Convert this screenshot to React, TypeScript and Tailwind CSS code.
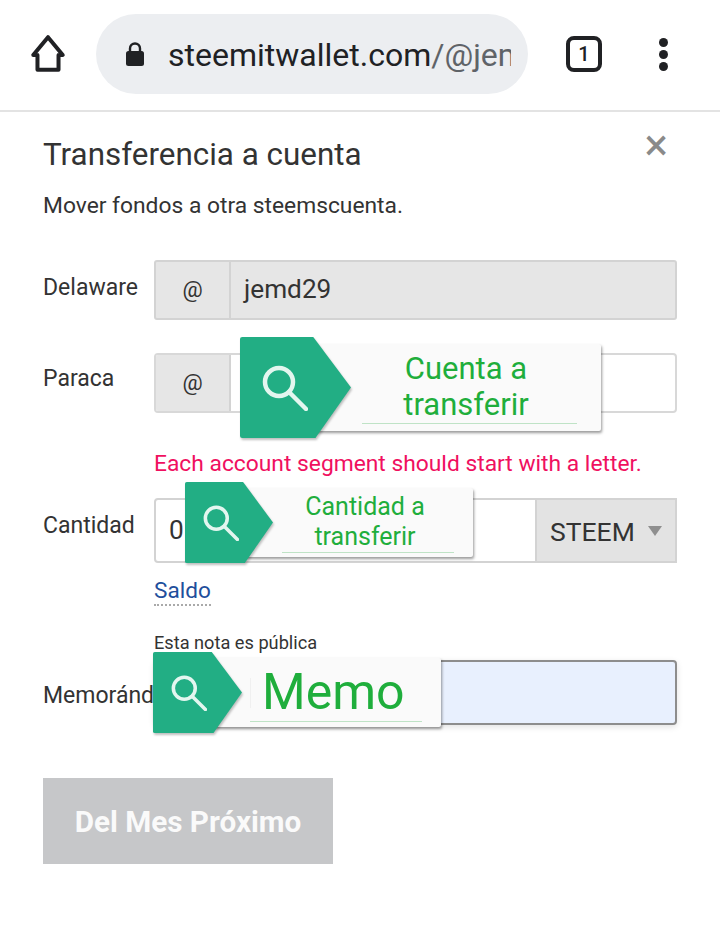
import React from 'react';

const HomeIcon = () => (
  <svg width="40" height="40" viewBox="0 0 38 38" fill="none" stroke="#202124" strokeWidth="3.8" strokeLinejoin="round">
    <path d="M19 3 L33 20 H29 V34 H9 V20 H5 Z" />
  </svg>
);

const LockIcon = () => (
  <svg width="22" height="26" viewBox="0 0 22 26">
    <path d="M6 11 V7.5 a5 5 0 0 1 10 0 V11" fill="none" stroke="#202124" strokeWidth="2.4" />
    <rect x="2" y="10" width="18" height="15" rx="2.5" fill="#202124" />
  </svg>
);

interface HintBadgeProps {
  className: string;
  tagWidth: number;
  iconSize: number;
  children: React.ReactNode;
}

// the little search hints that sit on top of the form
const HintBadge: React.FC<HintBadgeProps> = ({ className, tagWidth, iconSize, children }) => (
  <div className={`absolute ${className}`}>
    <div className="absolute inset-y-[7%] left-[12px] right-0 rounded-[2px] bg-[#fafafa] shadow-[1px_2px_3px_rgba(0,0,0,0.4)]">
      {children}
    </div>
    <svg
      className="absolute left-0 top-0 h-full drop-shadow-[1px_2px_1px_rgba(0,0,0,0.25)]"
      width={tagWidth}
      viewBox="0 0 100 100"
      preserveAspectRatio="none"
    >
      <path d="M2 0 H66 L100 50 L68 100 H2 Q0 100 0 98 V2 Q0 0 2 0 Z" fill="#22ae84" />
    </svg>
    <svg
      className="absolute"
      style={{ left: tagWidth * 0.2, top: '50%', transform: 'translateY(-50%)' }}
      width={iconSize}
      height={iconSize}
      viewBox="0 0 46 46"
      fill="none"
      stroke="#e3f6ef"
      strokeWidth="4.5"
      strokeLinecap="round"
    >
      <circle cx="17" cy="17" r="14" />
      <path d="M27 27 L44 44" />
    </svg>
  </div>
);

const Field: React.FC<{ label: string; children: React.ReactNode; className?: string; labelClass?: string }> = ({
  label,
  children,
  className = '',
  labelClass = '',
}) => (
  <div className={`flex ${className}`}>
    <div className={`w-[111px] shrink-0 text-[23px] text-[#333] ${labelClass}`}>{label}</div>
    <div className="w-[523px]">{children}</div>
  </div>
);

export default function App() {
  return (
    <div className="relative h-[942px] w-[720px] overflow-hidden bg-white font-['Roboto',sans-serif] text-[#333]">
      {/* browser bar */}
      <div className="flex h-[112px] items-center border-b-2 border-[#e3e3e3] pb-[2px] pl-[28px]">
        <HomeIcon />
        <div className="ml-[28px] flex h-[80px] w-[432px] items-center rounded-[40px] bg-[#eceef1] pl-[28px]">
          <LockIcon />
          <div className="ml-[22px] w-[343px] overflow-hidden whitespace-nowrap pt-[2px] text-[32px] text-[#202124]">
            steemitwallet.com<span className="text-[#5f6368]">/@jemd29</span>
          </div>
        </div>
        <div className="ml-[38px] flex h-[36px] w-[36px] items-center justify-center rounded-[8px] border-[4px] border-[#202124] text-[20px] font-medium text-[#202124]">
          1
        </div>
        <div className="ml-[57px] flex flex-col gap-[3px]">
          <div className="h-[9px] w-[9px] rounded-full bg-[#202124]" />
          <div className="h-[9px] w-[9px] rounded-full bg-[#202124]" />
          <div className="h-[9px] w-[9px] rounded-full bg-[#202124]" />
        </div>
      </div>

      <div className="relative px-[43px]">
        <div className="whitespace-nowrap pt-[24px] text-[31.4px] leading-[38px] text-[#333]">Transferencia a cuenta</div>
        <div className="absolute right-[52px] top-[9px] text-[44px] leading-[48px] text-[#8a8a8a]">×</div>
        <div className="mt-[18px] whitespace-nowrap text-[22.8px] leading-[28px]">Mover fondos a otra steemscuenta.</div>

        <Field label="Delaware" className="mt-[40px]" labelClass="pt-[10.5px]">
          <div className="flex h-[60px] overflow-hidden rounded-[3px] border-2 border-[#d3d3d3] bg-[#e6e6e6]">
            <div className="flex w-[75px] items-center justify-center border-r-2 border-[#d3d3d3] text-[22.5px]">@</div>
            <div className="flex items-center pl-[13px] text-[26.2px]">jemd29</div>
          </div>
        </Field>

        <Field label="Paraca" className="mt-[33px]" labelClass="pt-[8.5px]">
          <div className="flex h-[60px] overflow-hidden rounded-[4px] border-2 border-[#d8d8d8] bg-white">
            <div className="flex w-[75px] items-center justify-center border-r-2 border-[#d3d3d3] bg-[#e6e6e6] text-[22.5px]">
              @
            </div>
          </div>
        </Field>

        <div className="ml-[111px] mt-[37px] whitespace-nowrap text-[22.8px] leading-[28px] text-[#f0105f]">
          Each account segment should start with a letter.
        </div>

        <Field label="Cantidad" className="mt-[20px]" labelClass="pt-[10.5px]">
          <div className="flex h-[65px] overflow-hidden rounded-l-[4px] border-2 border-[#d3d3d3] bg-white">
            <div className="flex flex-1 items-center pl-[13px] text-[26.2px]">0</div>
            <div className="flex w-[140px] items-center border-l-2 border-[#d3d3d3] bg-[#e3e3e3] pl-[13px] text-[26.5px]">
              <span className="pt-[3px]">STEEM</span>
              <div className="ml-[13px] h-0 w-0 border-x-[7px] border-t-[10px] border-x-transparent border-t-[#8f8f8f]" />
            </div>
          </div>
        </Field>

        <div className="ml-[111px] mt-[14px] w-fit border-b-2 border-dotted border-[#aaa] text-[22.6px] leading-[27px] text-[#1f4f9c]">
          Saldo
        </div>

        <div className="ml-[111px] mt-[25px] whitespace-nowrap text-[18.2px] leading-[24px]">Esta nota es pública</div>

        <Field label="Memorándum" className="mt-[5px]" labelClass="pt-[18.5px] whitespace-nowrap">
          <div className="h-[65px] rounded-[4px] border-2 border-[#8d8d8d] bg-[#e8f0fe] shadow-[0_2px_6px_rgba(0,0,0,0.12)]" />
        </Field>

        <div className="mt-[53px] flex h-[86px] w-[290px] items-center justify-center whitespace-nowrap bg-[#c6c7c9] pt-[2px] text-[29.7px] font-bold text-[#fafafa]">
          Del Mes Próximo
        </div>
      </div>

      <HintBadge className="left-[240px] top-[337px] h-[101px] w-[361px]" tagWidth={111} iconSize={46}>
        <div className="ml-[110px] mr-[24px] mt-[7px] border-b border-[#bfe3c6] pr-[7px] text-center text-[31px] leading-[36px] text-[#1fae3c]">
          Cuenta a<br />
          transferir
        </div>
      </HintBadge>

      <HintBadge className="left-[185px] top-[482px] h-[81px] w-[288px]" tagWidth={88} iconSize={36}>
        <div className="ml-[85px] mr-[19px] mt-[4px] border-b border-[#bfe3c6] pr-[6px] text-center text-[25px] leading-[30px] text-[#1fae3c]">
          Cantidad a<br />
          transferir
        </div>
      </HintBadge>

      <HintBadge className="left-[153px] top-[652px] h-[81px] w-[288px]" tagWidth={89} iconSize={36}>
        <div className="ml-[85px] mr-[19px] mt-[6px] border-b border-[#bfe3c6] pl-[12px] text-[50px] leading-[57px] text-[#1fae3c]">
          Memo
        </div>
        <div className="absolute left-[85px] top-[20px] h-[30px] w-px bg-[#f0f0f0]" />
      </HintBadge>
    </div>
  );
}
